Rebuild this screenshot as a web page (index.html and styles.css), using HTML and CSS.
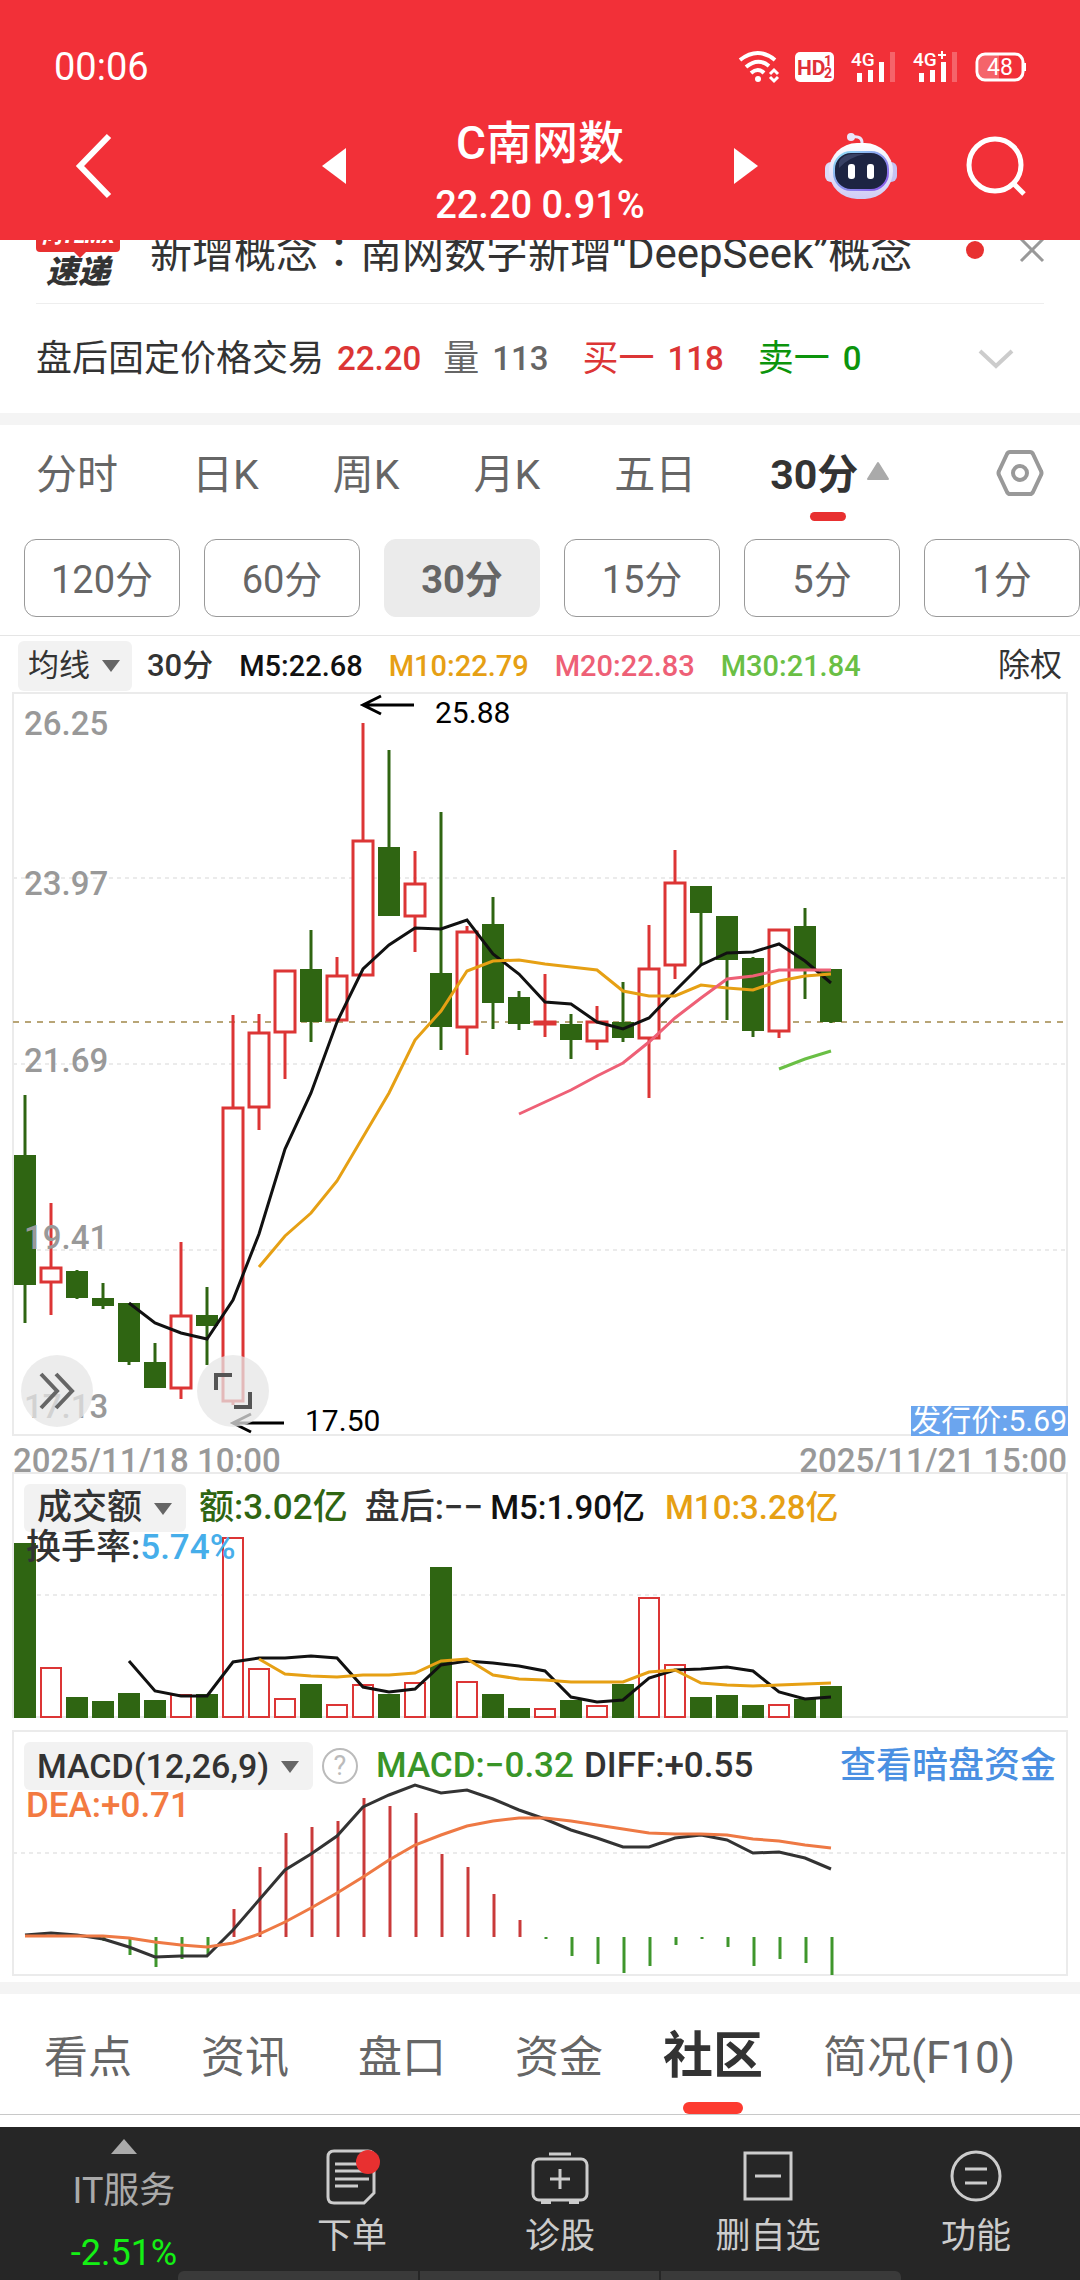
FILE: index.html
```html
<!DOCTYPE html>
<html lang="zh-CN">
<head>
    <meta charset="UTF-8">
    <meta name="viewport" content="width=device-width, initial-scale=1.0">
    <title>C南网数</title>
    <link rel="stylesheet" href="styles.css">
</head>
<body>
    <header class="header">
        <div class="status-bar">
            <span class="time">00:06</span>
            <div class="status-icons">
                <svg width="40" height="32" viewBox="0 0 40 32" fill="none" stroke="#fff" stroke-width="4">
                    <path d="M1 9Q19 -5 36 9M7 16Q19 6 30 15M12 22Q19 16 25 22" />
                    <circle cx="19" cy="28" r="3" fill="#fff" stroke="none" />
                    <path d="M31 23l4-4 4 4M31 26l4 4 4-4" stroke-width="3" />
                </svg>
                <svg width="40" height="32" viewBox="0 0 40 32">
                    <rect y="1" width="39" height="30" rx="5" fill="#fff" />
                    <text x="2" y="24" class="hd-text">HD</text>
                    <text x="29" y="15" class="hd-num">1</text>
                    <text x="29" y="27" class="hd-num">2</text>
                </svg>
                <svg width="46" height="32" viewBox="0 0 46 32" fill="#fff">
                    <text x="0" y="15" class="net-text">4G</text>
                    <path d="M6 22h5v9H6zM17 19h5v12h-5zM28 11h5v20h-5z" />
                    <path d="M39 1h5v30h-5z" opacity=".25" />
                </svg>
                <svg width="46" height="32" viewBox="0 0 46 32" fill="#fff">
                    <text x="0" y="15" class="net-text">4G</text>
                    <path d="M28 0h2v3h3v2h-3v3h-2V5h-3V3h3z" />
                    <path d="M6 22h5v9H6zM17 19h5v12h-5zM28 11h5v20h-5z" />
                    <path d="M39 1h5v30h-5z" opacity=".25" />
                </svg>
                <svg width="52" height="32" viewBox="0 0 52 32">
                    <path d="M4 4h20v24H4z" fill="#fff" opacity=".25" />
                    <rect x="2" y="3" width="46" height="26" rx="8" fill="none" stroke="#fff" stroke-width="3" />
                    <path d="M48 12h3v8h-3z" fill="#fff" />
                    <text x="25" y="24" text-anchor="middle" class="battery-text">48</text>
                </svg>
            </div>
        </div>

        <nav class="title-bar">
            <div class="side">
                <button class="back-btn" aria-label="返回">
                    <svg width="36" height="66" viewBox="0 0 36 66"><path d="M33 3L4 33l29 30" fill="none" stroke="#fff" stroke-width="6" /></svg>
                </button>
                <button aria-label="上一只">
                    <svg width="24" height="36" viewBox="0 0 24 36"><path d="M24 0v36L0 18z" fill="#fff" /></svg>
                </button>
            </div>
            <div class="stock">
                <h1>C南网数</h1>
                <p>22.20 0.91%</p>
            </div>
            <div class="side">
                <button aria-label="下一只">
                    <svg width="24" height="36" viewBox="0 0 24 36"><path d="M0 0v36l24-18z" fill="#fff" /></svg>
                </button>
                <div class="actions">
                    <button aria-label="智能助手">
                        <svg width="72" height="68" viewBox="0 0 72 68">
                            <defs>
                                <linearGradient id="shell" x1="0" y1="0" x2="0" y2="1">
                                    <stop offset="0" stop-color="#fff" />
                                    <stop offset="1" stop-color="#cfccf5" />
                                </linearGradient>
                                <linearGradient id="rim" x1="0" y1="0" x2="1" y2="1">
                                    <stop offset="0" stop-color="#8fe3f5" />
                                    <stop offset="1" stop-color="#8a50e8" />
                                </linearGradient>
                            </defs>
                            <path d="M27 5q11-2 10 8" fill="none" stroke="#e9e6fb" stroke-width="3" />
                            <circle cx="26" cy="5" r="4" fill="#e9e6fb" />
                            <rect x="0" y="30" width="12" height="20" rx="6" fill="#dcdaf8" />
                            <rect x="60" y="30" width="12" height="20" rx="6" fill="#c5c2f2" />
                            <rect x="4" y="11" width="64" height="56" rx="28" fill="url(#shell)" />
                            <rect x="9" y="20" width="54" height="38" rx="17" fill="#1d2442" stroke="url(#rim)" stroke-width="2" />
                            <path d="M14 30q4-8 14-8h12q-16 3-26 14z" fill="#4b557c" opacity=".6" />
                            <rect x="23" y="32" width="7" height="15" rx="3" fill="#fff" />
                            <rect x="42" y="32" width="7" height="15" rx="3" fill="#fff" />
                        </svg>
                    </button>
                    <button aria-label="搜索">
                        <svg width="60" height="60" viewBox="0 0 60 60" fill="none" stroke="#fff" stroke-width="5">
                            <circle cx="29" cy="29" r="26" /><path d="M47 47l11 11" />
                        </svg>
                    </button>
                </div>
            </div>
        </nav>
    </header>

    <main>
        <section class="news">
            <div class="news-logo"><span>问TEMX</span><strong>速递</strong></div>
            <a href="#" class="news-text">新增概念<span lang="zh-TW" class="colon">：</span>南网数字新增“DeepSeek”概念</a>
            <i class="dot"></i>
            <button aria-label="关闭">
                <svg width="24" height="24" viewBox="0 0 24 24"><path d="M1 1l22 22M23 1L1 23" stroke="#999" stroke-width="3" /></svg>
            </button>
        </section>

        <section class="after-hours">
            <span>盘后固定价格交易</span><b class="red">22.20</b>
            <span class="gray volume">量</span><b class="gray">113</b>
            <span class="red label">买一</span><b class="red">118</b>
            <span class="green label">卖一</span><b class="green">0</b>
            <button aria-label="展开">
                <svg width="36" height="22" viewBox="0 0 36 22"><path d="M2 3l16 15L34 3" fill="none" stroke="#ccc" stroke-width="4" /></svg>
            </button>
        </section>

        <nav class="period-tabs">
            <button>分时</button>
            <button>日K</button>
            <button>周K</button>
            <button>月K</button>
            <button>五日</button>
            <button class="active">30分<svg width="22" height="18" viewBox="0 0 22 18"><path d="M11 1l10 16H1z" fill="#aaa" stroke="#aaa" stroke-linejoin="round" stroke-width="2" /></svg></button>
            <button class="settings" aria-label="设置">
                <svg width="48" height="48" viewBox="0 0 48 48" fill="none" stroke="#999" stroke-width="4" stroke-linejoin="round">
                    <path d="M14 3h20q2 0 3 2l8 17q1 2 0 4l-8 17q-1 2-3 2H14q-2 0-3-2L3 26q-1-2 0-4l8-17q1-2 3-2z" />
                    <circle cx="24" cy="24" r="7" />
                </svg>
            </button>
        </nav>

        <div class="minutes">
            <button>120分</button>
            <button>60分</button>
            <button class="active">30分</button>
            <button>15分</button>
            <button>5分</button>
            <button>1分</button>
        </div>

        <div class="ma-bar">
            <div class="picker">
                <select aria-label="主图指标"><option>均线</option></select>
            </div>
            <span>30分</span>
            <span class="ma m5">M5:22.68</span>
            <span class="ma m10">M10:22.79</span>
            <span class="ma m20">M20:22.83</span>
            <span class="ma m30">M30:21.84</span>
            <button>除权</button>
        </div>

        <section class="panel">
            <svg id="price" class="chart" viewBox="0 690 1080 748"></svg>
            <button class="round first" aria-label="收起">
                <svg width="34" height="36" viewBox="0 0 34 36"><path d="M1 1l16 17L1 35M16 1l16 17-16 17" fill="none" stroke="#666" stroke-width="4" /></svg>
            </button>
            <button class="round second" aria-label="全屏">
                <svg width="38" height="38" viewBox="0 0 38 38"><path d="M2 18V3h16M36 20v15H20" fill="none" stroke="#555" stroke-width="4" /></svg>
            </button>
        </section>

        <div class="dates"><span>2025/11/18 10:00</span><span>2025/11/21 15:00</span></div>

        <section class="panel">
            <svg id="volume" class="chart" viewBox="0 1472 1080 248"></svg>
            <div class="overlay">
                <div class="line">
                    <div class="picker wide">
                        <select aria-label="成交指标"><option>成交额</option></select>
                    </div>
                    <span class="up">额:3.02亿</span>
                    <span class="after">盘后:−−</span><span class="m5">M5:1.90亿</span>
                    <span class="m10 next">M10:3.28亿</span>
                </div>
                <div class="line second-line"><span>换手率:</span><span class="blue">5.74%</span></div>
            </div>
        </section>

        <section class="panel macd">
            <svg id="macd" class="chart" viewBox="0 1730 1080 246"></svg>
            <div class="overlay">
                <div class="line">
                    <div class="picker wide">
                        <select aria-label="副图指标"><option>MACD(12,26,9)</option></select>
                    </div>
                    <button class="help" aria-label="帮助">?</button>
                    <span class="macd-value">MACD:−0.32</span>
                    <span>DIFF:+0.55</span>
                    <a href="#">查看暗盘资金</a>
                </div>
                <div class="line second-line"><span class="dea">DEA:+0.71</span></div>
            </div>
        </section>

        <nav class="info-tabs">
            <a href="#">看点</a>
            <a href="#">资讯</a>
            <a href="#">盘口</a>
            <a href="#">资金</a>
            <a href="#" class="active">社区</a>
            <a href="#">简况(F10)</a>
        </nav>
    </main>

    <footer class="footer">
        <button class="sector">
            <svg width="26" height="15" viewBox="0 0 26 15"><path d="M13 0l13 15H0z" fill="#aaa" /></svg>
            <span>IT服务</span>
            <span class="drop">-2.51%</span>
        </button>
        <button>
            <svg width="56" height="56" viewBox="0 0 56 56" fill="none" stroke="#ccc" stroke-width="3">
                <path d="M10 2h34q6 0 6 6v36L40 54H10q-6 0-6-6V8q0-6 6-6z" />
                <path d="M11 15h24M11 22h30M11 30h34M11 37h23" />
                <circle cx="44" cy="13" r="12" fill="#e83030" stroke="none" />
            </svg>
            <span>下单</span>
        </button>
        <button>
            <svg width="60" height="56" viewBox="0 0 60 56" fill="none" stroke="#ccc" stroke-width="3">
                <rect x="3" y="10" width="54" height="41" rx="6" />
                <path d="M19 5h22M30 20v20M20 30h20" />
                <path d="M11 53h10M39 53h10" stroke-width="4" />
            </svg>
            <span>诊股</span>
        </button>
        <button>
            <svg width="56" height="56" viewBox="0 0 56 56" fill="none" stroke="#ccc" stroke-width="3">
                <rect x="5" y="4" width="46" height="46" /><path d="M15 27h26" />
            </svg>
            <span>删自选</span>
        </button>
        <button>
            <svg width="56" height="56" viewBox="0 0 56 56" fill="none" stroke="#ccc" stroke-width="3">
                <circle cx="28" cy="27" r="24" /><path d="M17 20h22M17 34h22" />
            </svg>
            <span>功能</span>
        </button>
        <div class="strip"><i></i><i></i><i></i></div>
    </footer>

    <script src="chart.js"></script>
</body>
</html>
```

FILE: styles.css
```css
* {
    margin: 0;
    padding: 0;
    box-sizing: border-box;
}

body {
    font-family: Roboto, "Noto Sans CJK SC", sans-serif;
    background: #fff;
    color: #333;
}

button, select {
    font: inherit;
    color: inherit;
    background: none;
    border: none;
    cursor: pointer;
}

a {
    color: inherit;
    text-decoration: none;
}

svg {
    display: block;
    overflow: visible;
}

/* header */
.header {
    position: relative;
    z-index: 2;
    background: #f23038;
    color: #fff;
}

.status-bar {
    display: flex;
    justify-content: space-between;
    align-items: center;
    height: 92px;
    padding: 42px 53px 0 54px;
}

.time {
    font-size: 38px;
}

.status-icons {
    display: flex;
    gap: 16px;
}

.hd-text {
    font-size: 21px;
    font-weight: 700;
    fill: #e03038;
}

.hd-num {
    font-size: 14px;
    font-weight: 700;
    fill: #e03038;
}

.net-text {
    font-size: 19px;
    font-weight: 500;
}

.battery-text {
    font-size: 23px;
    fill: #fff;
}

.title-bar {
    display: grid;
    grid-template-columns: 1fr auto 1fr;
    align-items: center;
    gap: 89px;
    height: 148px;
    padding: 0 54px;
}

.side {
    display: flex;
    justify-content: space-between;
    align-items: center;
}

.back-btn {
    width: 80px;
    display: flex;
    justify-content: center;
}

.actions {
    display: flex;
    align-items: center;
    gap: 69px;
}

.stock {
    padding-top: 16px;
    text-align: center;
}

.stock h1 {
    font-size: 46px;
    font-weight: 500;
    line-height: 62px;
}

.stock p {
    font-size: 38px;
    font-weight: 500;
    line-height: 62px;
}

/* news, scrolled part way under the header */
.news {
    display: flex;
    align-items: center;
    margin: -44px 36px 0;
    height: 108px;
    border-bottom: 1px solid #eee;
}

.news-logo {
    width: 84px;
    margin-right: 30px;
    padding-top: 12px;
    text-align: center;
}

.news-logo span {
    position: relative;
    display: block;
    background: #e83030;
    color: #fff;
    font-size: 20px;
    font-weight: 900;
    font-style: italic;
    line-height: 32px;
    border-radius: 4px;
}

.news-logo span::after {
    content: "";
    position: absolute;
    left: 38px;
    top: 32px;
    border: 6px solid transparent;
    border-top-color: #e83030;
}

.news-logo strong {
    display: block;
    font-size: 32px;
    font-weight: 900;
    font-style: italic;
    line-height: 40px;
}

.news-text {
    flex: 1;
    padding-top: 4px;
    font-size: 42px;
    line-height: 60px;
    white-space: nowrap;
}

.colon {
    font-family: "Noto Sans CJK TC", sans-serif;
}

.dot {
    width: 18px;
    height: 18px;
    margin-right: 36px;
    border-radius: 50%;
    background: #e83030;
}

.after-hours {
    display: flex;
    align-items: center;
    height: 121px;
    padding: 0 66px 0 36px;
    font-size: 36px;
    line-height: 50px;
    border-bottom: 12px solid #f4f4f4;
}

.after-hours b {
    font-size: 33px;
    font-weight: 500;
    margin-left: 13px;
}

.after-hours .volume {
    margin-left: 22px;
}

.after-hours .label {
    margin-left: 34px;
}

.after-hours button {
    margin-left: auto;
}

.red {
    color: #dc3535;
}

.gray {
    color: #666;
}

.green {
    color: #0c940c;
}

/* period tabs */
.period-tabs {
    display: flex;
    align-items: center;
    gap: 74px;
    height: 96px;
    padding: 0 36px;
    font-size: 41px;
    color: #666;
}

.period-tabs button {
    padding-bottom: 4px;
}

.period-tabs .active {
    position: relative;
    display: flex;
    align-items: center;
    gap: 9px;
    color: #333;
    font-weight: 700;
}

.period-tabs .active::after {
    content: "";
    position: absolute;
    left: 40px;
    bottom: -16px;
    width: 36px;
    height: 9px;
    border-radius: 5px;
    background: #e83030;
}

.period-tabs .settings {
    margin-left: auto;
    padding-bottom: 0;
}

.minutes {
    display: grid;
    grid-template-columns: repeat(6, 1fr);
    gap: 24px;
    padding: 18px 0 18px 24px;
    border-bottom: 1px solid #e5e5e5;
}

.minutes button {
    height: 78px;
    padding-bottom: 4px;
    border: 1px solid #999;
    border-radius: 12px;
    font-size: 38px;
    color: #666;
}

.minutes .active {
    background: #ebebeb;
    border-color: #ebebeb;
    font-weight: 700;
}

/* indicators */
.ma-bar {
    display: flex;
    align-items: baseline;
    gap: 26px;
    height: 54px;
    padding: 3px 18px 0;
    font-size: 31px;
    font-weight: 500;
}

.ma-bar .picker {
    margin-right: -11px;
}

.ma-bar .ma {
    font-size: 29px;
}

.ma-bar button {
    margin-left: auto;
    font-size: 32px;
    font-weight: 400;
}

.picker {
    position: relative;
    background: #f2f2f2;
    border-radius: 6px;
}

.picker::after {
    content: "";
    position: absolute;
    right: 12px;
    top: 19px;
    border: 9px solid transparent;
    border-top: 12px solid #666;
    border-bottom: none;
    pointer-events: none;
}

.picker select {
    display: block;
    appearance: none;
    height: 50px;
    padding: 0 42px 0 10px;
    font-weight: 400;
}

.picker.wide select {
    height: 48px;
    padding: 0 43px 0 13px;
    font-weight: 500;
}

.picker.wide::after {
    right: 14px;
}

.m5 {
    color: #111;
}

.m10 {
    color: #e6a014;
}

.m20 {
    color: #ee6076;
}

.m30 {
    color: #6abf45;
}

.panel {
    position: relative;
}

.macd {
    margin-top: 10px;
    padding-bottom: 6px;
    border-bottom: 12px solid #f4f4f4;
}

.chart {
    width: 100%;
    height: auto;
}

.axis-label {
    font-size: 33px;
    font-weight: 500;
    fill: #999;
}

.mark-label {
    font-size: 30px;
    fill: #000;
}

.issue-label {
    font-size: 30px;
    fill: #fff;
}

.round {
    position: absolute;
    bottom: 11px;
    display: flex;
    justify-content: center;
    align-items: center;
    width: 72px;
    height: 72px;
    border-radius: 50%;
    background: rgba(230, 230, 230, 0.75);
}

.round.first {
    left: 21px;
}

.round.second {
    left: 197px;
}

.dates {
    display: flex;
    justify-content: space-between;
    height: 34px;
    padding: 0 13px;
    font-size: 33px;
    font-weight: 500;
    line-height: 46px;
    color: #999;
}

.overlay {
    position: absolute;
    top: 12px;
    left: 24px;
    right: 24px;
    font-size: 35px;
    font-weight: 500;
}

.line {
    display: flex;
    align-items: center;
    height: 48px;
    line-height: 48px;
}

.line .m5, .line .m10 {
    font-size: 33px;
}

.second-line {
    position: relative;
    height: 32px;
    padding-left: 2px;
    line-height: 32px;
}

.up {
    margin-left: 13px;
    color: #2f6512;
}

.after {
    margin-left: 17px;
    margin-right: 7px;
}

.next {
    margin-left: 20px;
}

.blue {
    color: #46aeea;
}

.macd .picker select {
    font-size: 34px;
}

.help {
    width: 36px;
    height: 36px;
    margin: 0 18px 0 9px;
    border: 2px solid #bbb;
    border-radius: 50%;
    font-size: 27px;
    font-weight: 400;
    line-height: 32px;
    color: #bbb;
}

.macd-value {
    margin-right: 10px;
    color: #399528;
}

.line a {
    margin-left: auto;
    font-size: 36px;
    color: #4a90e2;
}

.dea {
    color: #f37a41;
}

/* info tabs */
.info-tabs {
    display: flex;
    align-items: center;
    gap: 69px;
    height: 121px;
    margin-bottom: 12px;
    padding: 0 44px;
    border-bottom: 1px solid #c8c8c8;
    font-size: 44px;
    color: #666;
    white-space: nowrap;
}

.info-tabs .active {
    position: relative;
    margin: 0 -9px;
    padding-top: 4px;
    font-size: 50px;
    font-weight: 700;
    line-height: 116px;
    color: #333;
}

.info-tabs .active::after {
    content: "";
    position: absolute;
    left: 20px;
    bottom: 0;
    width: 60px;
    height: 12px;
    border-radius: 6px;
    background: #fd3b30;
}

/* footer */
.footer {
    position: relative;
    display: grid;
    grid-template-columns: 31fr 26fr 26fr 26fr 26fr;
    height: 153px;
    background: #262626;
    color: #ccc;
    font-size: 35px;
}

.footer button {
    display: flex;
    flex-direction: column;
    align-items: center;
    gap: 7px;
    padding-top: 22px;
    line-height: 50px;
}

.footer .sector {
    gap: 12px;
    padding-top: 12px;
    font-size: 36px;
    color: #aaa;
}

.footer .drop {
    color: #14f014;
}

.strip {
    position: absolute;
    left: 178px;
    right: 179px;
    bottom: 0;
    display: flex;
    gap: 2px;
    height: 9px;
    border-radius: 6px 6px 0 0;
    overflow: hidden;
}

.strip i {
    flex: 1;
    background: #3a3a3a;
}
```

FILE: chart.js
```js
const RED = '#dc3535';
const GREEN = '#2f6512';
const STEP = 26;
const x = i => 25 + i * STEP;

// [up, high, top, bottom, low], the three panels share one coordinate space
const candles = [
    [0, 1095, 1155, 1285, 1323], [1, 1203, 1267, 1283, 1315], [0, 1270, 1271, 1298, 1299],
    [0, 1283, 1298, 1306, 1309], [0, 1303, 1303, 1362, 1365], [0, 1343, 1362, 1388, 1388],
    [1, 1242, 1315, 1389, 1399], [0, 1287, 1315, 1326, 1365], [1, 1015, 1107, 1402, 1405],
    [1, 1014, 1032, 1108, 1130], [1, 970, 970, 1033, 1079], [0, 930, 969, 1022, 1042],
    [1, 957, 975, 1021, 1021], [1, 723, 840, 976, 976], [0, 750, 847, 916, 916],
    [1, 851, 883, 917, 952], [0, 812, 973, 1027, 1050], [1, 926, 931, 1028, 1055],
    [0, 897, 924, 1003, 1029], [0, 991, 997, 1024, 1030], [1, 974, 1021, 1025, 1037],
    [0, 1014, 1024, 1040, 1059], [1, 1006, 1021, 1042, 1050], [0, 982, 1022, 1038, 1042],
    [1, 925, 968, 1039, 1098], [1, 850, 882, 966, 979], [0, 886, 886, 913, 965],
    [0, 916, 916, 960, 1020], [0, 957, 958, 1031, 1037], [1, 929, 929, 1032, 1038],
    [0, 908, 926, 969, 999], [0, 969, 969, 1022, 1023]
];
const ma5 = [1303, 1323, 1333, 1339, 1300, 1234, 1149, 1093, 1022, 969, 945, 928, 929, 920, 954, 974, 1002, 1004, 1022, 1029, 1018, 991, 965, 953, 952, 944, 961, 983];
const ma10 = [1267, 1236, 1213, 1181, 1137, 1093, 1040, 1011, 971, 961, 960, 964, 967, 970, 991, 996, 996, 985, 988, 990, 981, 976, 974];
const ma20 = [1114, 1102, 1090, 1076, 1063, 1042, 1018, 998, 979, 976, 970, 970, 970];
const ma30 = [1069, 1059, 1051];

const volumes = [1543, 1667, 1697, 1701, 1693, 1700, 1694, 1694, 1537, 1668, 1698, 1684, 1704, 1684, 1694, 1682, 1567, 1681, 1694, 1708, 1708, 1700, 1705, 1684, 1597, 1664, 1697, 1695, 1705, 1704, 1699, 1686];
const vol5 = [1661, 1691, 1696, 1696, 1662, 1658, 1658, 1656, 1658, 1687, 1692, 1689, 1665, 1661, 1663, 1666, 1671, 1697, 1702, 1700, 1678, 1670, 1669, 1667, 1671, 1692, 1699, 1697];
const vol10 = [1659, 1674, 1676, 1677, 1675, 1675, 1673, 1661, 1659, 1675, 1679, 1680, 1682, 1682, 1682, 1672, 1670, 1683, 1685, 1686, 1685, 1684, 1683];

const bars = [1937, 1937, 1937, 1941, 1955, 1967, 1959, 1955, 1909, 1867, 1833, 1827, 1821, 1798, 1806, 1813, 1854, 1867, 1894, 1920, 1939, 1956, 1964, 1973, 1966, 1945, 1939, 1947, 1966, 1959, 1963, 1975];
const diff = [1935, 1933, 1935, 1939, 1947, 1957, 1956, 1956, 1930, 1900, 1870, 1854, 1836, 1807, 1795, 1785, 1793, 1790, 1799, 1810, 1819, 1830, 1838, 1847, 1847, 1838, 1835, 1840, 1853, 1852, 1858, 1869];
const dea = [1936, 1936, 1936, 1936, 1938, 1942, 1945, 1947, 1943, 1934, 1922, 1908, 1893, 1877, 1860, 1845, 1835, 1826, 1821, 1818, 1818, 1821, 1825, 1829, 1833, 1834, 1834, 1835, 1839, 1841, 1845, 1848];

function line(values, color) {
    const start = 32 - values.length;
    const points = values.map((y, i) => `${x(i + start)},${y}`).join(' ');
    return `<polyline points="${points}" fill="none" stroke="${color}" stroke-width="3"/>`;
}

function frame(top, bottom, grid) {
    let out = `<rect x="13" y="${top}" width="1054" height="${bottom - top}" fill="none" stroke="#ebebeb" stroke-width="2"/>`;
    grid.forEach(y => {
        out += `<path d="M13 ${y}H1067" stroke="#ebebeb" stroke-width="2" stroke-dasharray="4 4"/>`;
    });
    return out;
}

function box(up, i, top, bottom, stroke) {
    if (!up) return `<rect x="${x(i) - 11}" y="${top}" width="22" height="${bottom - top}" fill="${GREEN}"/>`;
    return `<rect x="${x(i) - 10}" y="${top + 1}" width="20" height="${bottom - top - 2}" fill="#fff" stroke="${RED}" stroke-width="${stroke}"/>`;
}

function arrow(tipX, y) {
    return `<path d="M${tipX + 51} ${y}H${tipX}M${tipX + 18} ${y - 9}L${tipX} ${y}l18 9" fill="none" stroke="#000" stroke-width="3"/>`;
}

let price = frame(693, 1435, [878, 1064, 1250]);
price += `<path d="M13 1022H1067" stroke="#b8a576" stroke-width="2" stroke-dasharray="6 6"/>`;
candles.forEach(([up, high, top, bottom, low], i) => {
    price += `<path d="M${x(i)} ${high}V${low}" stroke="${up ? RED : GREEN}" stroke-width="3"/>`;
    price += box(up, i, top, bottom, 3);
});
price += line(ma5, '#111') + line(ma10, '#e6a014') + line(ma20, '#ee6076') + line(ma30, '#6abf45');
[['26.25', 735], ['23.97', 895], ['21.69', 1072], ['19.41', 1249], ['17.13', 1418]].forEach(([text, y]) => {
    price += `<text x="24" y="${y}" class="axis-label">${text}</text>`;
});
price += arrow(363, 705) + '<text x="435" y="723" class="mark-label">25.88</text>';
price += arrow(233, 1423) + '<text x="305" y="1431" class="mark-label">17.50</text>';
price += '<rect x="911" y="1406" width="157" height="30" fill="#6ba5ee"/>';
price += '<text x="1067" y="1431" text-anchor="end" class="issue-label">发行价:5.69</text>';
document.getElementById('price').innerHTML = price;

let volume = frame(1473, 1717, [1595]);
volumes.forEach((y, i) => {
    volume += box(candles[i][0], i, y, 1718, 2);
});
volume += line(vol5, '#111') + line(vol10, '#e6a014');
document.getElementById('volume').innerHTML = volume;

let macd = frame(1731, 1975, [1853]);
bars.forEach((y, i) => {
    macd += `<path d="M${x(i) + 1} 1937V${y}" stroke="${y < 1937 ? '#c93a3a' : '#3f962c'}" stroke-width="3"/>`;
});
macd += line(diff, '#333') + line(dea, '#ee7944');
document.getElementById('macd').innerHTML = macd;
```
